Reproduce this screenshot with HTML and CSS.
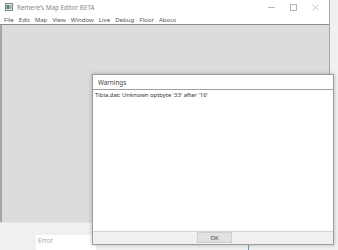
FILE: index.html
```html
<!DOCTYPE html>
<html lang="en">
<head>
  <meta charset="UTF-8" />
  <title>Remere's Map Editor BETA</title>
  <link rel="stylesheet" href="styles.css">
</head>
<body>
  <div id="desktop">
    <div class="main">
      <div class="titlebar">
        <svg class="appicon" width="8" height="8" viewBox="0 0 8 8">
          <rect x="0.5" y="0.5" width="7" height="7" fill="#e8ece8" stroke="#7a8a80"/>
          <rect x="1.5" y="2" width="3" height="4" fill="#4f8a6a"/>
          <rect x="5" y="2" width="1.5" height="4" fill="#9aa8a0"/>
        </svg>
        <span class="title">Remere's Map Editor BETA</span>
        <div class="controls">
          <svg width="7" height="7" viewBox="0 0 7 7"><path d="M0 3.5h7" stroke="#b4b4b4" stroke-width="1"/></svg>
          <svg width="7" height="7" viewBox="0 0 7 7"><rect x="0.5" y="0.5" width="6" height="6" fill="none" stroke="#b4b4b4"/></svg>
          <svg width="7" height="7" viewBox="0 0 7 7"><path d="M0.5 0.5l6 6M6.5 0.5l-6 6" stroke="#b4b4b4" stroke-width="0.8"/></svg>
        </div>
      </div>
      <div class="menubar">
        <span>File</span><span>Edit</span><span>Map</span><span>View</span><span>Window</span><span>Live</span><span>Debug</span><span>Floor</span><span>About</span>
      </div>
      <div class="canvas"></div>
      <div class="statusbar"></div>
    </div>
    <div class="errorpane">Error</div>
    <div class="taskline"></div>

    <div class="dialog">
      <div class="dlg-title">Warnings</div>
      <div class="dlg-body">Tibia.dat: Unknown optbyte '33' after '16'</div>
      <div class="dlg-foot"><button class="ok">OK</button></div>
    </div>
  </div>
</body>
</html>
```
FILE: styles.css
```css
body {
  margin: 0;
  width: 338px;
  height: 250px;
  overflow: hidden;
  background: #f0f0f0;
  font-family: "Noto Sans", "Open Sans", sans-serif;
}
#desktop {
  position: relative;
  width: 338px;
  height: 250px;
}
.main {
  width: 330px;
  height: 234px;
  display: flex;
  flex-direction: column;
  background: #fff;
  border-right: 1px solid #a8a8a8;
  box-sizing: border-box;
}
.titlebar {
  height: 14px;
  display: flex;
  align-items: center;
  padding-left: 5px;
}
.appicon { margin-right: 4px; }
.title {
  font-size: 6.3px;
  color: #8a8a8a;
}
.controls {
  margin-left: auto;
  display: flex;
  gap: 15px;
  margin-right: 10px;
  margin-top: 1px;
}
.menubar {
  height: 10px;
  display: flex;
  align-items: center;
  padding-left: 4px;
  gap: 5px;
  font-size: 6.1px;
  color: #555;
  border-bottom: 1px solid #8c8c8c;
}
.canvas {
  flex: 1;
  background: #dcdcdc;
  border-left: 2px solid #a6a6a6;
}
.statusbar {
  height: 11px;
  background: #f0f0f0;
  border-top: 1px solid #e4e4e4;
}
.errorpane {
  position: absolute;
  left: 36px;
  top: 235px;
  width: 60px;
  height: 15px;
  background: #fff;
  font-size: 6.3px;
  color: #a8a8a8;
  padding: 1px 2px;
  box-sizing: border-box;
}
.taskline {
  position: absolute;
  left: 248px;
  top: 243px;
  width: 1px;
  height: 7px;
  background: #4aa0e0;
}
.dialog {
  position: absolute;
  left: 92px;
  top: 74px;
  width: 242px;
  height: 171px;
  background: #fff;
  border: 1px solid #9c9c9c;
  box-sizing: border-box;
  box-shadow: 0 0 4px rgba(0, 0, 0, 0.25);
  display: flex;
  flex-direction: column;
}
.dlg-title {
  height: 14px;
  display: flex;
  align-items: center;
  padding-left: 5px;
  font-size: 6.3px;
  color: #444;
  border-bottom: 1px solid #a0a0a0;
}
.dlg-body {
  flex: 1;
  padding: 1px 2px;
  font-size: 5.9px;
  color: #333;
}
.dlg-foot {
  height: 12px;
  background: #f0f0f0;
  border-top: 1px solid #d4d4d4;
  padding-left: 104px;
}
.ok {
  width: 35px;
  height: 11px;
  padding: 0;
  margin: 0;
  background: #e1e1e1;
  border: 1px solid #cfcfcf;
  font-family: inherit;
  font-size: 5.9px;
  color: #444;
  display: block;
}
```
